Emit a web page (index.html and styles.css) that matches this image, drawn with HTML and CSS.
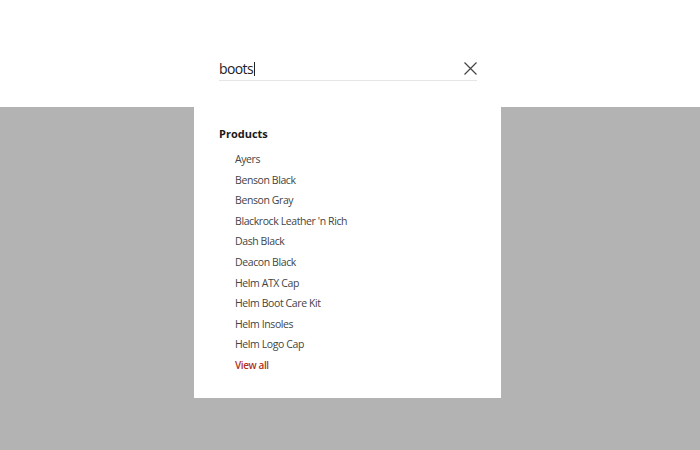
FILE: index.html
```html
<!DOCTYPE html>
<html>
<head>
<meta charset="utf-8">
<link rel="stylesheet" href="styles.css">
</head>
<body>
<header class="header">
  <div class="wrap">
    <div class="search">
      <span class="query">boots</span><span class="caret"></span>
      <svg class="close" width="13" height="13" viewBox="0 0 13 13"><path d="M0.5 0.5L12.5 12.5M12.5 0.5L0.5 12.5" stroke="#444" stroke-width="1.2" fill="none"/></svg>
    </div>
  </div>
</header>
<div class="wrap">
  <div class="panel">
    <div class="heading">Products</div>
    <ul class="list">
      <li>Ayers</li>
      <li>Benson Black</li>
      <li>Benson Gray</li>
      <li>Blackrock Leather 'n Rich</li>
      <li>Dash Black</li>
      <li>Deacon Black</li>
      <li>Helm ATX Cap</li>
      <li>Helm Boot Care Kit</li>
      <li>Helm Insoles</li>
      <li>Helm Logo Cap</li>
      <li class="viewall">View all</li>
    </ul>
  </div>
</div>
</body>
</html>
```
FILE: styles.css
```css
html, body {
  margin: 0;
  padding: 0;
}
body {
  background: #b3b3b3;
  font-family: "Open Sans", "Liberation Sans", sans-serif;
  height: 450px;
}
.header {
  background: #ffffff;
  height: 107px;
}
.wrap {
  width: 307px;
  margin-left: 194px;
}
.search {
  margin-left: 25px;
  width: 258px;
  padding-top: 57px;
  height: 23px;
  border-bottom: 1px solid #e6e6e6;
  display: flex;
  align-items: center;
}
.query {
  font-size: 14px;
  color: #222;
  line-height: 23px;
  letter-spacing: -0.6px;
}
.caret {
  width: 1px;
  height: 14px;
  background: #222;
  margin-left: 1px;
}
.close {
  margin-left: auto;
  margin-right: 0;
}
.panel {
  background: #ffffff;
  height: 291px;
  padding: 19px 25px 0;
  box-sizing: border-box;
}
.heading {
  font-size: 11px;
  font-weight: bold;
  color: #1a1a1a;
  line-height: 16px;
  margin-bottom: 7px;
}
.list {
  list-style: none;
  margin: 0;
  padding: 0 0 0 16px;
}
.list li {
  font-size: 10.5px;
  color: #444;
  line-height: 20.6px;
  letter-spacing: -0.4px;
}
.list .viewall {
  color: #b3301c;
  font-weight: 600;
  font-size: 10px;
}
```
